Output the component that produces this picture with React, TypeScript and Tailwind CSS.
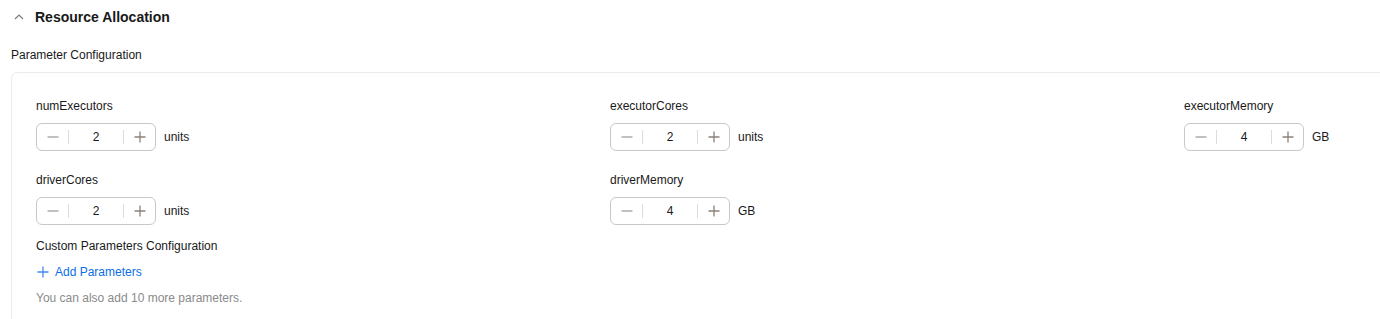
import React from "react";

function Minus() {
  return (
    <svg width="14" height="14" viewBox="0 0 14 14">
      <path d="M1.5 7h11" stroke="#9e9e9e" strokeWidth="1.3" />
    </svg>
  );
}
function Plus({ color = "#8c8178" }: { color?: string }) {
  return (
    <svg width="14" height="14" viewBox="0 0 14 14">
      <path d="M1.5 7h11M7 1.5v11" stroke={color} strokeWidth="1.3" />
    </svg>
  );
}

function Stepper({ label, value, unit }: { label: string; value: number; unit: string }) {
  return (
    <div className="flex flex-col">
      <div className="h-[18px] leading-[18px] text-[12px] text-[#191919]">{label}</div>
      <div className="mt-[8px] flex items-center">
        <div className="flex h-[28px] w-[120px] items-center rounded-[6px] border border-[#c8c8c8] bg-white">
          <div className="flex w-[31px] items-center justify-center pl-[1px]">
            <Minus />
          </div>
          <div className="h-[14px] w-px bg-[#dcdcdc]" />
          <div className="flex-1 text-center text-[12px] text-[#191919]">{value}</div>
          <div className="h-[14px] w-px bg-[#dcdcdc]" />
          <div className="flex w-[31px] items-center justify-center">
            <Plus />
          </div>
        </div>
        <span className="ml-[8px] text-[12px] text-[#191919]">{unit}</span>
      </div>
    </div>
  );
}

export default function App() {
  return (
    <div
      className="h-[319px] w-[1380px] overflow-hidden bg-white"
      style={{ fontFamily: '"Liberation Sans", Arial, sans-serif' }}
    >
      <div className="flex h-[34px] items-center pl-[13px]">
        <svg width="12" height="12" viewBox="0 0 12 12" className="mr-[10px]">
          <path d="M2 8l4-4 4 4" fill="none" stroke="#7a7a7a" strokeWidth="1.2" />
        </svg>
        <span className="text-[14px] font-bold text-[#191919]">Resource Allocation</span>
      </div>
      <div className="mt-[12px] pl-[11px] text-[12px] leading-[18px] text-[#191919]">Parameter Configuration</div>
      <div className="ml-[11px] mt-[8px] w-[1800px] rounded-[6px] border border-[#ebebeb] pl-[24px] pt-[24px]">
        <div className="grid grid-cols-[574px_574px_574px] gap-y-[20px]">
          <Stepper label="numExecutors" value={2} unit="units" />
          <Stepper label="executorCores" value={2} unit="units" />
          <Stepper label="executorMemory" value={4} unit="GB" />
          <Stepper label="driverCores" value={2} unit="units" />
          <Stepper label="driverMemory" value={4} unit="GB" />
        </div>
        <div className="mt-[12px] text-[12px] leading-[18px] text-[#191919]">Custom Parameters Configuration</div>
        <div className="mt-[8px] flex h-[18px] items-center text-[12px] text-[#0d6ee8]">
          <span className="mr-[5px] flex">
            <Plus color="#3f8cf0" />
          </span>
          Add Parameters
        </div>
        <div className="mt-[8px] text-[12px] leading-[18px] text-[#8a8a8a]">You can also add 10 more parameters.</div>
        <div className="h-[20px]" />
      </div>
    </div>
  );
}
